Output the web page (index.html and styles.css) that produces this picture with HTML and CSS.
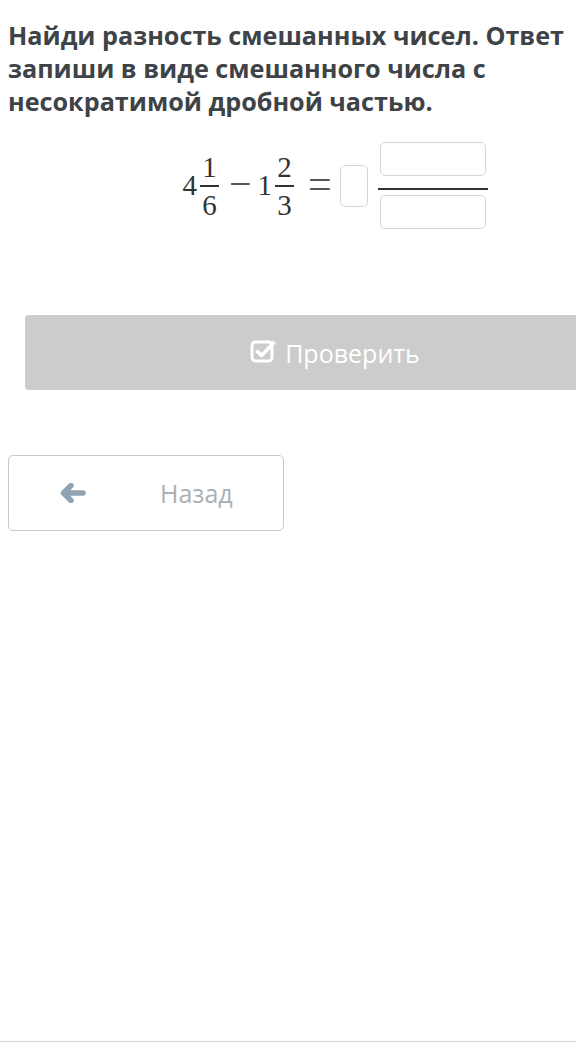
FILE: index.html
```html
<!DOCTYPE html>
<html>
    <head>
        <title>Разность смешанных чисел</title>
        <link rel="stylesheet" href="styles.css">
    </head>
    <body>
        <div class="page">
            <h2 class="task">Найди разность смешанных чисел. Ответ запиши в виде смешанного числа с несократимой дробной частью.</h2>

            <div class="exercise">
                <div class="math">
                    <span class="num">4</span>
                    <span class="frac"><span>1</span><span class="bar"></span><span>6</span></span>
                    <span class="op minus">−</span>
                    <span class="num">1</span>
                    <span class="frac"><span>2</span><span class="bar"></span><span>3</span></span>
                    <span class="op eq">=</span>
                    <input type="text" class="box whole">
                    <span class="answer-frac">
                        <input type="text" class="box part">
                        <span class="answer-bar"></span>
                        <input type="text" class="box part">
                    </span>
                </div>
            </div>

            <div class="check-row">
                <button class="check" disabled>
                    <svg width="27" height="25" viewBox="0 0 27 25">
                        <rect x="2" y="4" width="20" height="19" rx="3.5" fill="none" stroke="#fff" stroke-width="3"/>
                        <path d="M6.5 12.5 L11.5 17.5 L24.5 4" fill="none" stroke="#fff" stroke-width="3.8" stroke-linejoin="round"/>
                    </svg>
                    Проверить
                </button>
            </div>

            <button class="back">
                <svg width="26" height="20" viewBox="0 0 26 20">
                    <path d="M11 2.5 L3.5 10 L11 17.5 M4.5 10 L23 10" fill="none" stroke="#8fa3b3" stroke-width="5.5" stroke-linecap="round" stroke-linejoin="round"/>
                </svg>
                <span>Назад</span>
            </button>
        </div>
        <div class="footer-line"></div>
    </body>
</html>
```

FILE: styles.css
```css
body {
  margin: 0;
  padding: 0;
  background: #fff;
  font-family: 'Open Sans', Arial, sans-serif;
  overflow-x: hidden;
  height: 1050px;
  position: relative;
}

.page {
  padding: 0 8px;
}

.task {
  margin: 19px 0 0;
  font-size: 25.2px;
  line-height: 33px;
  font-weight: 700;
  color: #3e4347;
}

.exercise {
  width: 618px;
  margin: 24px 0 0 17px;
  display: flex;
  justify-content: center;
}

.math {
  display: flex;
  align-items: center;
  font-family: 'Liberation Serif', 'DejaVu Serif', serif;
  font-size: 29px;
  color: #333;
  margin-left: 2px;
}

.num {
  line-height: 1;
}

.frac {
  display: flex;
  flex-direction: column;
  align-items: center;
  margin: 0 6px 0 3px;
  line-height: 30px;
}

.frac .bar {
  width: 19px;
  height: 2px;
  background: #333;
  margin: 3px 0;
}

.op {
  color: #555;
}

.op.minus {
  margin: -4px 6px 0 4px;
  font-size: 40px;
  font-weight: 300;
  line-height: 1;
}

.op.eq {
  margin: -4px 8px 0 8px;
  font-size: 42px;
  line-height: 1;
}

.box {
  border: 1px solid #d3d6d8;
  border-radius: 5px;
  background: #fff;
  box-sizing: border-box;
  padding: 0;
}

.box.whole {
  width: 28px;
  height: 42px;
}

.answer-frac {
  display: flex;
  flex-direction: column;
  align-items: center;
  margin-left: 10px;
}

.box.part {
  width: 106px;
  height: 34px;
}

.answer-bar {
  width: 110px;
  height: 2px;
  background: #333;
  margin: 12px 0 5px;
}

.check-row {
  margin: 86px 0 0 17px;
  width: 618px;
}

.check {
  width: 100%;
  height: 75px;
  border: none;
  border-radius: 4px;
  background: #cccccc;
  color: #fff;
  font-family: 'Open Sans', Arial, sans-serif;
  font-size: 25px;
  display: flex;
  align-items: center;
  justify-content: center;
  gap: 8px;
  padding: 0 0 0 2px;
}

.check svg {
  margin-top: -4px;
}

.back {
  margin-top: 65px;
  width: 276px;
  height: 76px;
  border: 1px solid #c4c9cc;
  border-radius: 5px;
  background: #fff;
  display: flex;
  align-items: center;
  padding: 0 0 0 51px;
  box-sizing: border-box;
  font-family: 'Open Sans', Arial, sans-serif;
  font-size: 25px;
  font-weight: 400;
  color: #a9b1b6;
}

.back span {
  margin-left: 74px;
}

.footer-line {
  position: absolute;
  left: 0;
  right: 0;
  top: 1041px;
  height: 1px;
  background: #d2d2d2;
}
```
